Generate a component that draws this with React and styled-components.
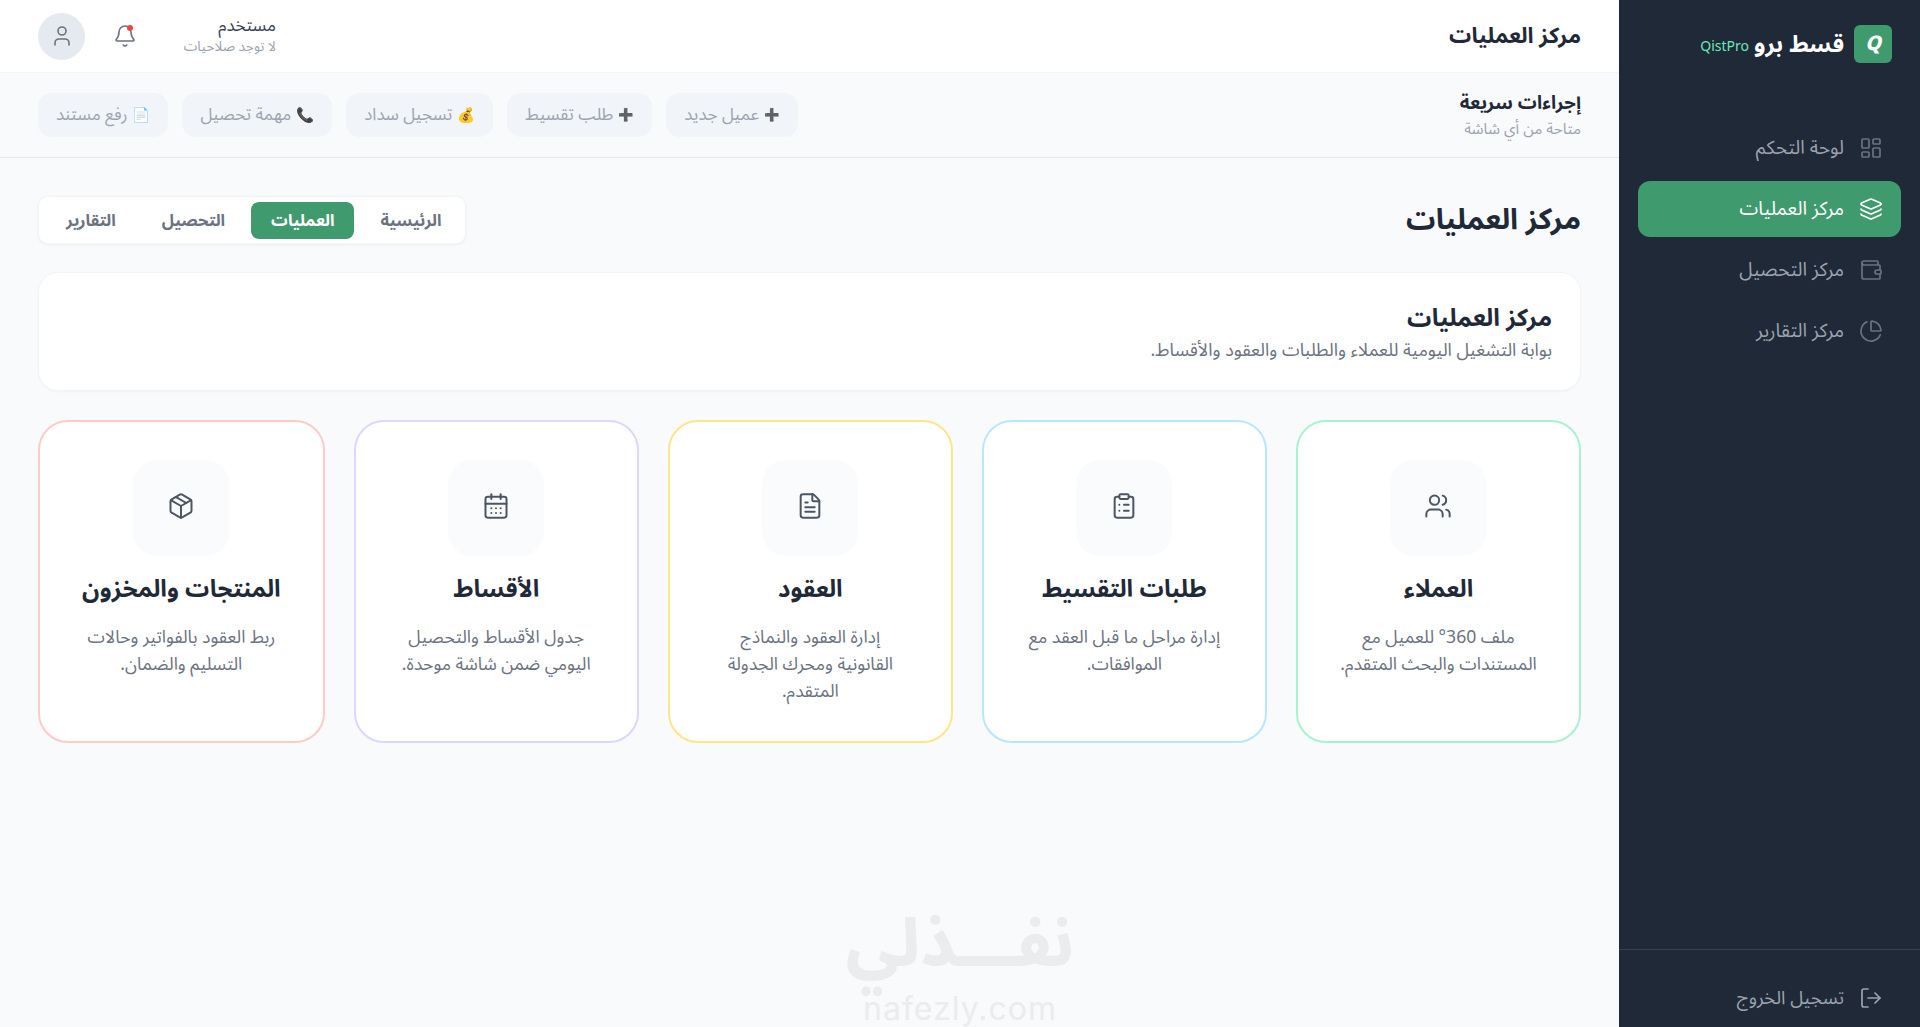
import React from 'react';
import styled, { createGlobalStyle } from 'styled-components';
import {
    LayoutDashboard, Layers, Wallet, ChartPie, LogOut, Bell, User,
    Users, ClipboardList, FileText, CalendarDays, Package
} from 'lucide-react';

const GlobalStyle = createGlobalStyle`
    * { box-sizing: border-box; }
    html, body { margin: 0; padding: 0; height: 100%; }
    body {
        background: #f8fafc;
        font-family: "Noto Sans Arabic", "Noto Kufi Arabic", "DejaVu Sans", sans-serif;
    }
`;

const Shell = styled.div`
    position: relative;
    display: flex;
    height: 1027px;
    overflow: hidden;
    direction: rtl;
    background: #f8fafc;
`;

const Sidebar = styled.aside`
    flex: 0 0 301px;
    display: flex;
    flex-direction: column;
    background: #1f2937;
`;

const Brand = styled.div`
    display: flex;
    align-items: center;
    gap: 10px;
    height: 88px;
    padding: 0 28px;
`;

const BrandMark = styled.div`
    width: 38px;
    height: 38px;
    display: flex;
    align-items: center;
    justify-content: center;
    border-radius: 6px;
    background: #3f9a6e;
    color: #fff;
    font-size: 20px;
    font-weight: 800;
    font-style: italic;
`;

const BrandName = styled.div`
    color: #fff;
    font-size: 23px;
    font-weight: 700;
`;

const BrandLatin = styled.div`
    margin: 4px -5px 0 0;
    color: #6ee7b7;
    font-size: 14px;
`;

const Nav = styled.nav`
    display: flex;
    flex-direction: column;
    gap: 5px;
    flex: 1;
    padding: 32px 19px 0 19px;
`;

const NavItem = styled.div`
    height: 56px;
    display: flex;
    align-items: center;
    gap: 15px;
    padding: 0 18px;
    border-radius: 12px;
    font-size: 19px;
    background: ${p => (p.$active ? '#3f9a6e' : 'transparent')};
    color: ${p => (p.$active ? '#fff' : '#9ca3af')};
    svg { color: ${p => (p.$active ? '#fff' : '#6b7280')}; }
`;

const SidebarFoot = styled.div`
    height: 78px;
    display: flex;
    align-items: center;
    gap: 15px;
    padding: 19px 37px 0;
    border-top: 1px solid #374151;
    color: #9ca3af;
    font-size: 18.6px;
`;

const Content = styled.div`
    flex: 1;
    min-width: 0;
    display: flex;
    flex-direction: column;
`;

const Header = styled.header`
    height: 73px;
    display: flex;
    align-items: center;
    justify-content: space-between;
    padding: 0 38px;
    background: #fff;
    border-bottom: 1px solid #f1f5f9;
`;

const HeaderTitle = styled.h1`
    margin: 0;
    color: #1f2937;
    font-size: 22px;
    font-weight: 700;
`;

const UserArea = styled.div`
    display: flex;
    align-items: center;
    gap: 30px;
`;

const UserText = styled.div`
    display: flex;
    flex-direction: column;
    width: 109px;
`;

const UserName = styled.div`
    color: #374151;
    font-size: 17px;
    line-height: 22px;
`;

const UserRole = styled.div`
    color: #9ca3af;
    font-size: 13.7px;
    line-height: 20px;
`;

const BellWrap = styled.div`
    position: relative;
    display: flex;
    margin-left: -2px;
    color: #6b7280;
`;

const BellDot = styled.span`
    position: absolute;
    top: 1px;
    left: 14px;
    width: 6px;
    height: 6px;
    border-radius: 50%;
    background: #ef4444;
`;

const Avatar = styled.div`
    width: 47px;
    height: 47px;
    display: flex;
    align-items: center;
    justify-content: center;
    border-radius: 50%;
    background: #e5e9f0;
    color: #6b7280;
`;

const QuickBar = styled.section`
    height: 85px;
    display: flex;
    align-items: center;
    justify-content: space-between;
    padding: 0 38px;
    border-bottom: 1px solid #e5e7eb;
`;

const QuickTitle = styled.div`
    color: #1f2937;
    font-size: 18.8px;
    font-weight: 700;
    line-height: 28px;
`;

const QuickHint = styled.div`
    color: #9ca3af;
    font-size: 15.3px;
    line-height: 24px;
`;

const QuickActions = styled.div`
    display: flex;
    gap: 14px;
`;

const QuickButton = styled.div`
    height: 44px;
    display: flex;
    align-items: center;
    gap: 5px;
    padding: 0 18px;
    border-radius: 14px;
    background: #f1f5f9;
    color: #9ca3af;
    font-size: 17px;
    white-space: nowrap;
`;

const QuickGlyph = styled.span`
    color: #374151;
    font-size: ${p => (p.$emoji ? '14.5px' : '12.5px')};
`;

const Main = styled.main`
    flex: 1;
    padding: 38px 38px 0;
`;

const TitleRow = styled.div`
    display: flex;
    align-items: center;
    justify-content: space-between;
    height: 48px;
    margin-bottom: 28px;
`;

const PageTitle = styled.h2`
    margin: 0;
    color: #1f2937;
    font-size: 29.2px;
    font-weight: 700;
`;

const Tabs = styled.div`
    display: flex;
    align-items: center;
    gap: 6px;
    height: 48px;
    padding: 0 3px 0 7px;
    background: #fff;
    border: 1px solid #f1f5f9;
    border-radius: 10px;
    box-shadow: 0 1px 3px rgba(0, 0, 0, 0.06);
`;

const Tab = styled.div`
    height: 37px;
    display: flex;
    align-items: center;
    padding: 0 20px;
    border-radius: 8px;
    font-size: 16.5px;
    font-weight: 700;
    background: ${p => (p.$active ? '#3f9a6e' : 'transparent')};
    color: ${p => (p.$active ? '#fff' : '#6b7280')};
`;

const IntroPanel = styled.section`
    height: 119px;
    padding: 0 28px;
    display: flex;
    flex-direction: column;
    justify-content: center;
    margin-bottom: 29px;
    background: #fff;
    border: 1px solid #f1f5f9;
    border-radius: 20px;
    box-shadow: 0 1px 2px rgba(0, 0, 0, 0.03);
`;

const IntroTitle = styled.h3`
    margin: 0;
    color: #1f2937;
    font-size: 24.2px;
    font-weight: 700;
    line-height: 36px;
`;

const IntroText = styled.p`
    margin: 0;
    color: #6b7280;
    font-size: 17.9px;
    line-height: 26px;
`;

const CardGrid = styled.div`
    display: grid;
    grid-template-columns: repeat(5, 1fr);
    gap: 29px;
`;

const Card = styled.article`
    height: 323px;
    display: flex;
    flex-direction: column;
    align-items: center;
    padding: 38px 42px 0;
    background: #fff;
    border: 2px solid ${p => p.$border};
    border-radius: 30px;
    text-align: center;
`;

const CardIcon = styled.div`
    flex: none;
    width: 96px;
    height: 96px;
    display: flex;
    align-items: center;
    justify-content: center;
    padding-bottom: 4px;
    margin-bottom: 14px;
    border-radius: 24px;
    background: #fafbfc;
    color: #4b5563;
`;

const CardTitle = styled.h4`
    margin: 0 0 14px;
    color: #1f2937;
    font-size: 24px;
    font-weight: 700;
    line-height: 40px;
    white-space: nowrap;
`;

const CardText = styled.p`
    margin: 0;
    color: #6b7280;
    font-size: 17.6px;
    line-height: 27px;
`;

const Watermark = styled.div`
    position: absolute;
    left: 820px;
    top: 905px;
    width: 280px;
    text-align: center;
    color: #eaecee;
    pointer-events: none;
`;

const WatermarkArabic = styled.div`
    font-size: 66px;
    font-weight: 800;
    line-height: 80px;
`;

const WatermarkLatin = styled.div`
    margin-top: 6px;
    direction: ltr;
    font-family: "Inter", sans-serif;
    font-size: 32px;
    line-height: 36px;
    letter-spacing: 1px;
`;

const navItems = [
    { label: 'لوحة التحكم', Icon: LayoutDashboard },
    { label: 'مركز العمليات', Icon: Layers, active: true },
    { label: 'مركز التحصيل', Icon: Wallet },
    { label: 'مركز التقارير', Icon: ChartPie }
];

const quickActions = [
    { glyph: '➕', label: 'عميل جديد' },
    { glyph: '➕', label: 'طلب تقسيط' },
    { glyph: '💰', label: 'تسجيل سداد', emoji: true },
    { glyph: '📞', label: 'مهمة تحصيل', emoji: true },
    { glyph: '📄', label: 'رفع مستند', emoji: true }
];

const tabs = ['الرئيسية', 'العمليات', 'التحصيل', 'التقارير'];

const cards = [
    { title: 'العملاء', text: 'ملف 360° للعميل مع المستندات والبحث المتقدم.', Icon: Users, border: '#a7f3d0' },
    { title: 'طلبات التقسيط', text: 'إدارة مراحل ما قبل العقد مع الموافقات.', Icon: ClipboardList, border: '#bae6fd' },
    { title: 'العقود', text: 'إدارة العقود والنماذج القانونية ومحرك الجدولة المتقدم.', Icon: FileText, border: '#fde68a' },
    { title: 'الأقساط', text: 'جدول الأقساط والتحصيل اليومي ضمن شاشة موحدة.', Icon: CalendarDays, border: '#ddd6fe' },
    { title: 'المنتجات والمخزون', text: 'ربط العقود بالفواتير وحالات التسليم والضمان.', Icon: Package, border: '#fecaca' }
];

const App = () => <Shell>
    <GlobalStyle />
    <Sidebar>
        <Brand>
            <BrandMark>Q</BrandMark>
            <BrandName>قسط برو</BrandName>
            <BrandLatin>QistPro</BrandLatin>
        </Brand>
        <Nav>
            {navItems.map(({ label, Icon, active }) => <NavItem key={label} $active={active}>
                <Icon size={24} strokeWidth={1.7} />
                {label}
            </NavItem>)}
        </Nav>
        <SidebarFoot>
            <LogOut size={24} strokeWidth={1.7} />
            تسجيل الخروج
        </SidebarFoot>
    </Sidebar>

    <Content>
        <Header>
            <HeaderTitle>مركز العمليات</HeaderTitle>
            <UserArea>
                <UserText>
                    <UserName>مستخدم</UserName>
                    <UserRole>لا توجد صلاحيات</UserRole>
                </UserText>
                <BellWrap>
                    <Bell size={24} strokeWidth={1.6} />
                    <BellDot />
                </BellWrap>
                <Avatar><User size={24} strokeWidth={1.6} /></Avatar>
            </UserArea>
        </Header>

        <QuickBar>
            <div>
                <QuickTitle>إجراءات سريعة</QuickTitle>
                <QuickHint>متاحة من أي شاشة</QuickHint>
            </div>
            <QuickActions>
                {quickActions.map(({ glyph, label, emoji }) => <QuickButton key={label}>
                    <QuickGlyph $emoji={emoji}>{glyph}</QuickGlyph>
                    {label}
                </QuickButton>)}
            </QuickActions>
        </QuickBar>

        <Main>
            <TitleRow>
                <PageTitle>مركز العمليات</PageTitle>
                <Tabs>
                    {tabs.map(tab => <Tab key={tab} $active={tab === 'العمليات'}>{tab}</Tab>)}
                </Tabs>
            </TitleRow>

            <IntroPanel>
                <IntroTitle>مركز العمليات</IntroTitle>
                <IntroText>بوابة التشغيل اليومية للعملاء والطلبات والعقود والأقساط.</IntroText>
            </IntroPanel>

            <CardGrid>
                {cards.map(({ title, text, Icon, border }) => <Card key={title} $border={border}>
                    <CardIcon><Icon size={28} strokeWidth={1.7} /></CardIcon>
                    <CardTitle>{title}</CardTitle>
                    <CardText>{text}</CardText>
                </Card>)}
            </CardGrid>
        </Main>
    </Content>

    <Watermark>
        <WatermarkArabic>نفـــذلي</WatermarkArabic>
        <WatermarkLatin>nafezly.com</WatermarkLatin>
    </Watermark>
</Shell>;

export default App;
